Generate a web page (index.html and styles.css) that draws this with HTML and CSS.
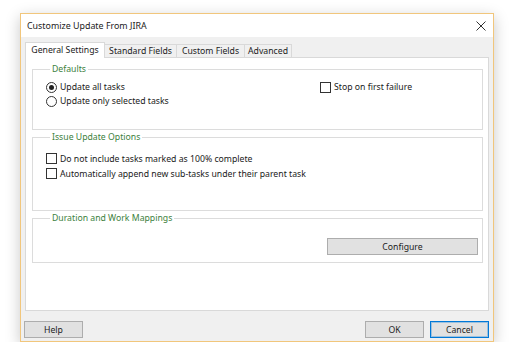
FILE: index.html
```html
<!DOCTYPE html>
<html lang="en">
<head>
    <meta charset="UTF-8">
    <title>Customize Update From JIRA</title>
    <link rel="stylesheet" href="styles.css">
</head>
<body>
    <div class="window">
        <div class="titlebar">
            <span class="title">Customize Update From JIRA</span>
            <svg class="close" width="10" height="10" viewBox="0 0 10 10">
                <path d="M0.5 0.5 L9.5 9.5 M9.5 0.5 L0.5 9.5" stroke="#333" stroke-width="1" fill="none"/>
            </svg>
        </div>
        <div class="client">
            <div class="tabs">
                <div class="tab active">General Settings</div>
                <div class="tab standard">Standard Fields</div>
                <div class="tab custom">Custom Fields</div>
                <div class="tab advanced">Advanced</div>
            </div>
            <div class="panel">
                <!-- Defaults -->
                <fieldset class="group defaults">
                    <legend>Defaults</legend>
                    <div class="defaults-row">
                        <div class="options">
                            <div class="option"><span class="radio checked"></span>Update all tasks</div>
                            <div class="option"><span class="radio"></span>Update only selected tasks</div>
                        </div>
                        <div class="option"><span class="check"></span>Stop on first failure</div>
                    </div>
                </fieldset>

                <!-- Issue update options -->
                <fieldset class="group issue">
                    <legend>Issue Update Options</legend>
                    <div class="option tall"><span class="check"></span>Do not include tasks marked as 100% complete</div>
                    <div class="option tall"><span class="check"></span>Automatically append new sub-tasks under their parent task</div>
                </fieldset>

                <!-- Mappings -->
                <fieldset class="group mappings">
                    <legend>Duration and Work Mappings</legend>
                    <div class="mapping-row">
                        <button class="btn configure">Configure</button>
                    </div>
                </fieldset>
            </div>
            <div class="footer">
                <button class="btn">Help</button>
                <div class="spacer"></div>
                <button class="btn">OK</button>
                <button class="btn default">Cancel</button>
            </div>
        </div>
    </div>
</body>
</html>
```

FILE: styles.css
```css
body {
    margin: 0;
    background-color: #ffffff;
    font-family: "Noto Sans", "Open Sans", sans-serif;
    font-size: 8.7px;
    color: #1a1a1a;
}
.window {
    box-sizing: border-box;
    width: 474px;
    height: 329px;
    margin: 13px 0 0 20px;
    border: 1px solid #f1c67c;
    background-color: #f0f0f0;
    box-shadow: 0 4px 14px rgba(0,0,0,0.22);
    display: flex;
    flex-direction: column;
}
.titlebar {
    height: 23px;
    background-color: #ffffff;
    display: flex;
    align-items: center;
    padding: 0 7px 0 6px;
}
.title {
    font-size: 8.9px;
    color: #222;
    flex: 1;
}
.close {
    display: block;
}
.client {
    flex: 1;
    display: flex;
    flex-direction: column;
    padding: 5px 4px 3px 4px;
}
.tabs {
    height: 15px;
    display: flex;
    align-items: flex-end;
}
.tab {
    box-sizing: border-box;
    height: 13px;
    line-height: 12px;
    border: 1px solid #d9d9d9;
    border-bottom: none;
    border-left: none;
    background-color: #f0f0f0;
    color: #222;
    text-align: center;
    white-space: nowrap;
}
.tab.active {
    width: 80px;
    height: 16px;
    line-height: 14px;
    margin-bottom: -1px;
    border-left: 1px solid #d9d9d9;
    background-color: #ffffff;
    position: relative;
}
.tab.standard {
    width: 72px;
}
.tab.custom {
    width: 68px;
}
.tab.advanced {
    width: 47px;
}
.panel {
    box-sizing: border-box;
    height: 254px;
    border: 1px solid #d9d9d9;
    background-color: #ffffff;
    padding: 4px 5px 0 6px;
}
.group {
    margin: 0;
    border: 1px solid #dcdcdc;
    padding: 0 4px 0 13px;
}
.group legend {
    line-height: 14px;
    padding: 0 2px;
    margin-left: 4px;
    color: #3d7f3d;
}
.defaults {
    padding-top: 4px;
    padding-bottom: 21px;
}
.defaults-row {
    display: flex;
}
.options {
    width: 274px;
}
.option {
    display: flex;
    align-items: center;
    height: 14px;
    white-space: nowrap;
}
.option.tall {
    height: 15px;
}
.radio, .check {
    box-sizing: border-box;
    width: 11px;
    height: 11px;
    border: 1px solid #333;
    margin-right: 3px;
    flex-shrink: 0;
}
.radio {
    border-radius: 50%;
    display: flex;
    align-items: center;
    justify-content: center;
}
.radio.checked::after {
    content: "";
    width: 5px;
    height: 5px;
    border-radius: 50%;
    background-color: #222;
}
.issue {
    padding-top: 7px;
    padding-bottom: 29px;
}
.mappings {
    padding-top: 13px;
    padding-bottom: 7px;
}
.mapping-row {
    display: flex;
    justify-content: flex-end;
}
.btn {
    box-sizing: border-box;
    height: 17px;
    width: 59px;
    padding: 0;
    border: 1px solid #adadad;
    background-color: #e1e1e1;
    font-family: inherit;
    font-size: 8.7px;
    color: #222;
}
.btn.configure {
    width: 151px;
}
.btn.default {
    border-color: #0078d7;
    box-shadow: inset 0 0 0 1px rgba(0,120,215,0.3);
}
.footer {
    display: flex;
    gap: 6px;
    margin-top: 10px;
    margin-left: -1px;
}
.spacer {
    flex: 1;
}
```
